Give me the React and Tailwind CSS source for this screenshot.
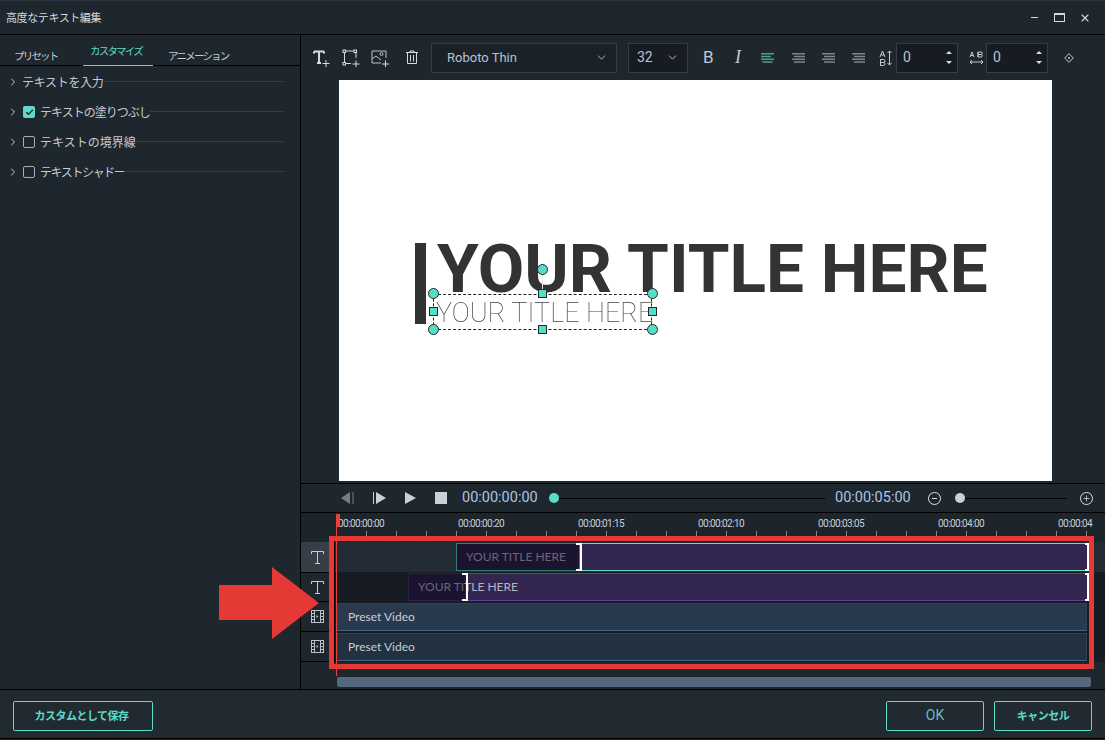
import React from 'react'
import { ChevronDown, ChevronRight, Check, Plus, X } from 'lucide-react'

const jp = { fontFamily: '"Noto Sans CJK JP", "Noto Sans", sans-serif' }

const sections = [
  { label: 'テキストを入力', box: null, tracking: 'tracking-[-0.3px]' },
  { label: 'テキストの塗りつぶし', box: true, tracking: 'tracking-[-1px]' },
  { label: 'テキストの境界線', box: false, tracking: 'tracking-[0px]' },
  { label: 'テキストシャドー', box: false, tracking: 'tracking-[-1.4px]' },
]

const rulerLabels = ['00:00:00:00', '00:00:00:20', '00:00:01:15', '00:00:02:10', '00:00:03:05', '00:00:04:00', '00:00:04']

const TextPlusIcon = () => (
  <svg width="18" height="18" viewBox="0 0 18 18" fill="none" stroke="#d5dbe2">
    <path d="M1 2.500h10M6 2.500v11M1 2.500v2M11 2.500v2M4 14h4" strokeWidth="2" />
    <path d="M9.500 14.500h7M13 11v7" strokeWidth="1" />
  </svg>
)

const BoxPlusIcon = () => (
  <svg width="18" height="18" viewBox="0 0 18 18" fill="none" stroke="#d5dbe2">
    <path d="M4 2h8M2.500 4v9M14 4v5M4 14.500h5" />
    <rect x="1" y="1" width="2.500" height="2.500" />
    <rect x="12" y="1" width="2.500" height="2.500" />
    <rect x="1" y="13.500" width="2.500" height="2.500" />
    <path d="M10.500 15h7M14 11.500v6.500" />
  </svg>
)

const ImagePlusIcon = () => (
  <svg width="19" height="18" viewBox="0 0 19 18" fill="none" stroke="#b9c0c8">
    <path d="M10 14H1V2h14v7" />
    <circle cx="10.500" cy="5" r="1.500" />
    <path d="M1 10l4-3 5 4" />
    <path d="M11 15h7M14.500 11.500v6.500" stroke="#d5dbe2" />
  </svg>
)

const TrashIcon = () => (
  <svg width="14" height="15" viewBox="0 0 14 15" fill="none" stroke="#d5dbe2">
    <path d="M1 2.500h12M5 2.500V1h4v1.500M2.500 3v10.500h9V3M5.500 5v6.500M8.500 5v6.500" />
  </svg>
)

const AlignIcon = ({ color = '#7d858d', left = false }) => (
  <svg width="14" height="10" viewBox="0 0 14 10" stroke={color} strokeWidth="1.400">
    <path d={left ? 'M0 .8h13M0 3.500h10M0 6.200h13M1.500 9h10' : 'M1 .8h13M3 3.500h11M1 6.200h13M3 9h11'} />
  </svg>
)

const TrackTIcon = () => (
  <svg width="13" height="13" viewBox="0 0 13 13" fill="none" stroke="#c9ced4">
    <path d="M.5 3V.500h12V3M6.500 .5v12M4 12.500h5" />
  </svg>
)

const FilmIcon = () => (
  <svg width="13" height="13" viewBox="0 0 13 13" fill="none" stroke="#b9bfc6">
    <rect x=".5" y=".5" width="12" height="12" />
    <path d="M3.500 .5v12M9.500 .5v12M.5 3.500h3M.5 6.500h3M.5 9.500h3M9.500 3.500h3M9.500 6.500h3M9.500 9.500h3" />
    <path d="M5.500 5l2 1.500-2 1.500z" fill="#b9bfc6" stroke="none" />
  </svg>
)

const Stepper = () => (
  <div className="flex flex-col gap-[7px] items-center">
    <div className="w-0 h-0 border-x-[3px] border-x-transparent border-b-[3px] border-b-[#d5dbe2]" />
    <div className="w-0 h-0 border-x-[3px] border-x-transparent border-t-[3px] border-t-[#d5dbe2]" />
  </div>
)

const Dot = ({ className }) => (
  <div className={`absolute w-[11px] h-[11px] rounded-full bg-[#5adcc9] border border-[#1d2a2e] ${className}`} />
)

const Square = ({ className }) => (
  <div className={`absolute w-[9px] h-[9px] bg-[#5adcc9] border border-[#1d2a2e] ${className}`} />
)

const Bracket = ({ className }) => (
  <div className={`absolute border-y-2 border-r-2 border-white ${className}`} />
)

const App = () => {
  return (
    <div className="relative w-[1105px] h-[740px] overflow-hidden flex flex-col bg-[#1e262e] border-t border-[#2c3540]" style={jp}>
      {/* Title bar */}
      <div className="h-[34px] shrink-0 flex items-center justify-between border-b border-black pl-[6px] pr-[14px]">
        <span className="text-[11px] tracking-[-0.4px] text-[#d5d9de]">高度なテキスト編集</span>
        <div className="flex items-center text-[#d5d9de]">
          <div className="w-[7px] h-px bg-[#d5d9de]" />
          <div className="ml-[16px] w-[11px] h-[9px] border border-t-2 border-[#d5d9de]" />
          <X size={12} strokeWidth={2.2} className="ml-[14px]" />
        </div>
      </div>

      <div className="flex h-[654px] shrink-0">
        {/* Left panel */}
        <aside className="w-[301px] shrink-0 border-r border-black">
          <div className="h-[31px] flex items-end border-b border-black text-[10.500px] tracking-[-1.800px] text-[#c6cbd1]">
            <div className="w-[83px] pl-[14px] pb-[1px]">プリセット</div>
            <div className="w-[70px] h-[23px] pl-[7px] border-b border-[#5adcc9] text-[#5adcc9] -mb-px">カスタマイズ</div>
            <div className="pl-[15px] pb-[1px]">アニメーション</div>
          </div>
          <div className="pt-[1px]">
            {sections.map((s) => (
              <div key={s.label} className="h-[30px] flex items-center pl-[8px] pr-[16px] text-[#c6cbd1]">
                <ChevronRight size={12} strokeWidth={2} className="shrink-0 -ml-[1px] mr-[3px]" />
                {s.box === true && (
                  <div className="w-[12px] h-[12px] ml-[1px] mr-[5px] rounded-[2px] bg-[#5adcc9] flex items-center justify-center">
                    <Check size={9} strokeWidth={3.5} className="text-[#1e262e]" />
                  </div>
                )}
                {s.box === false && <div className="w-[12px] h-[12px] ml-[1px] mr-[5px] rounded-[2px] border border-[#a6adb5]" />}
                <span className={`text-[12px] whitespace-nowrap ${s.tracking}`}>{s.label}</span>
                <div className="flex-1 h-px bg-[#343d48] mt-[-1px]" />
              </div>
            ))}
          </div>
        </aside>

        <main className="flex-1 min-w-0 flex flex-col">
          {/* Toolbar */}
          <div className="h-[45px] shrink-0 flex items-center pl-[12px]">
            <TextPlusIcon />
            <div className="ml-[11px]"><BoxPlusIcon /></div>
            <div className="ml-[11px]"><ImagePlusIcon /></div>
            <div className="ml-[15px]"><TrashIcon /></div>
            <div className="ml-[12px] w-[186px] h-[30px] flex items-center justify-between pl-[15px] pr-[8px] bg-[#1b2128] border border-[#343d48] text-[#b4c3d2] text-[13px]" style={{ fontFamily: 'Roboto, sans-serif' }}>
              Roboto Thin
              <ChevronDown size={13} strokeWidth={1.5} className="text-[#d5dbe2]" />
            </div>
            <div className="ml-[11px] w-[60px] h-[30px] flex items-center justify-between pl-[8px] pr-[8px] bg-[#171c23] border border-[#343d48] text-[#b4c3d2] text-[14px]" style={{ fontFamily: 'Roboto, sans-serif' }}>
              32
              <ChevronDown size={13} strokeWidth={1.5} className="text-[#d5dbe2]" />
            </div>
            <span className="ml-[15px] w-[12px] text-[17px] text-[#c3cad1] font-normal" style={{ fontFamily: 'Roboto, sans-serif' }}>B</span>
            <span className="ml-[20px] w-[10px] text-[18px] italic text-[#c3cad1]" style={{ fontFamily: '"Liberation Serif", serif' }}>I</span>
            <div className="ml-[16px]"><AlignIcon color="#4c9c8f" left /></div>
            <div className="ml-[16px]"><AlignIcon /></div>
            <div className="ml-[16px]"><AlignIcon /></div>
            <div className="ml-[16px]"><AlignIcon /></div>
            <div className="ml-[14px] w-[14px] flex items-center text-[#c3cad1]">
              <svg width="14" height="16" viewBox="0 0 14 16" fill="none" stroke="#c3cad1">
                <path d="M1 7l2.500-6L6 7M2 5h3M1.500 9.500h3a1.500 1.500 0 010 3h-3zM1.500 12.500h3a1.500 1.500 0 010 3h-3zM1.500 9.500v6M10.500 1v14M8.500 3l2-2 2 2M8.500 13l2 2 2-2" />
              </svg>
            </div>
            <div className="ml-[3px] w-[62px] h-[30px] flex items-center justify-between pl-[6px] pr-[5px] bg-[#171c23] border border-[#343d48] text-[#b4c3d2] text-[14px]" style={{ fontFamily: 'Roboto, sans-serif' }}>
              0
              <Stepper />
            </div>
            <div className="ml-[11px] w-[15px]">
              <svg width="15" height="14" viewBox="0 0 15 14" fill="none" stroke="#c3cad1">
                <path d="M1 6l2-5 2 5M2 4.500h2M9 1h3a1 1 0 010 2.500H9zM9 3.500h3a1 1 0 010 2.500H9zM9 1v5M1 11h13M3 9l-2 2 2 2M12 9l2 2-2 2" />
              </svg>
            </div>
            <div className="ml-[2px] w-[62px] h-[30px] flex items-center justify-between pl-[6px] pr-[5px] bg-[#171c23] border border-[#343d48] text-[#b4c3d2] text-[14px]" style={{ fontFamily: 'Roboto, sans-serif' }}>
              0
              <Stepper />
            </div>
            <div className="ml-[16px]">
              <svg width="10" height="10" viewBox="0 0 10 10" fill="none" stroke="#c3cad1">
                <path d="M5 .7L9.300 5 5 9.300 .7 5z" />
                <circle cx="5" cy="5" r="1" fill="#c3cad1" stroke="none" />
              </svg>
            </div>
          </div>

          {/* Preview */}
          <div className="h-[401px] shrink-0 pl-[38px]">
            <div className="relative w-[713px] h-full bg-white overflow-hidden" style={{ fontFamily: 'Roboto, sans-serif' }}>
              <div className="absolute left-[76px] top-[163px] w-[11px] h-[81px] bg-[#333333]" />
              <div className="absolute left-[98px] top-[149px] text-[67.500px] leading-[80px] font-bold whitespace-nowrap text-[#333333]">YOUR TITLE HERE</div>
              <div className="absolute left-[97px] top-[213px] text-[27px] leading-[40px] font-thin whitespace-nowrap text-[#444444] will-change-transform">YOUR TITLE HERE</div>

              <div className="absolute left-[94px] top-[214px] w-[219px] h-[36px] border border-dashed border-[#222222]" />
              <div className="absolute left-[203px] top-[194px] w-px h-[20px] bg-[#e4e4e4]" />
              <Dot className="left-[198px] top-[184px]" />
              <Dot className="left-[89px] top-[208px]" />
              <Dot className="left-[308px] top-[208px]" />
              <Dot className="left-[89px] top-[244px]" />
              <Dot className="left-[308px] top-[244px]" />
              <Square className="left-[199px] top-[209px]" />
              <Square className="left-[90px] top-[227px]" />
              <Square className="left-[309px] top-[227px]" />
              <Square className="left-[199px] top-[245px]" />
            </div>
          </div>

          {/* Transport */}
          <div className="h-[2px] shrink-0" />
          <div className="h-[30px] shrink-0 flex items-center border-y border-black pl-[40px] text-[14.500px] text-[#a9c5e2]" style={{ fontFamily: 'Roboto, sans-serif' }}>
            <svg width="13" height="12" viewBox="0 0 13 12" fill="#767d85">
              <path d="M9 0v12L0 6zM11.500 0h1v12h-1z" />
            </svg>
            <svg className="ml-[19px]" width="13" height="12" viewBox="0 0 13 12" fill="#c9d0d8">
              <path d="M0 0h1v12H0zM3 0l10 6-10 6z" />
            </svg>
            <svg className="ml-[19px]" width="11" height="12" viewBox="0 0 11 12" fill="#c9d0d8">
              <path d="M0 0l11 6-11 6z" />
            </svg>
            <div className="ml-[19px] w-[12px] h-[12px] bg-[#c9d0d8]" />
            <span className="ml-[15px] w-[76px] whitespace-nowrap">00:00:00:00</span>
            <div className="relative ml-[16px] w-[271px] h-px bg-black">
              <div className="absolute -left-[5px] -top-[5px] w-[10px] h-[10px] rounded-full bg-[#5adcc9]" />
            </div>
            <span className="ml-[10px] w-[76px] whitespace-nowrap">00:00:05:00</span>
            <div className="ml-[17px] w-[13px] h-[13px] rounded-full border border-[#dde2e8] flex items-center justify-center">
              <div className="w-[5px] h-px bg-[#dde2e8]" />
            </div>
            <div className="relative ml-[19px] w-[107px] h-px bg-black">
              <div className="absolute -left-[5px] -top-[5px] w-[10px] h-[10px] rounded-full bg-[#c9d0d8]" />
            </div>
            <div className="ml-[13px] w-[13px] h-[13px] rounded-full border border-[#dde2e8] flex items-center justify-center">
              <Plus size={9} strokeWidth={2} className="text-[#dde2e8]" />
            </div>
          </div>

          {/* Ruler */}
          <div className="h-[29px] shrink-0 pl-[36px] bg-[#1c242c] overflow-hidden" style={{ fontFamily: 'Roboto, sans-serif' }}>
            <div className="flex h-[18px] items-end">
              {rulerLabels.map((t) => (
                <div key={t} className="w-[120px] shrink-0 pl-[1px] text-[10px] leading-[14px] tracking-[-0.55px] text-[#c9d0d8] whitespace-nowrap">{t}</div>
              ))}
            </div>
            <div className="flex h-[5px] -ml-px">
              {Array.from({ length: 26 }).map((_, i) => (
                <div key={i} className="w-[30px] shrink-0 border-l border-[#6f8ba3]" />
              ))}
            </div>
          </div>

          {/* Tracks */}
          <div className="shrink-0">
            <div className="flex h-[30px]">
              <div className="w-[34px] shrink-0 bg-[#363e48] border-r border-black flex items-center justify-center"><TrackTIcon /></div>
              <div className="relative flex-1 bg-[#232c35]">
                <div className="absolute left-[121px] right-[17px] top-[1px] h-[28px] bg-[#332650] border-y border-[#5adcc9]" />
                <div className="absolute left-[121px] w-[124px] top-[1px] h-[28px] bg-[#1a1430] border border-[#2f7f70] flex items-center pl-[9px] text-[12px] text-[#6a6672] whitespace-nowrap" style={{ fontFamily: 'Lato, sans-serif' }}>YOUR TITLE HERE</div>
                <Bracket className="left-[241px] w-[6px] top-[1px] h-[28px]" />
                <Bracket className="left-[750px] w-[4px] top-[1px] h-[28px]" />
              </div>
            </div>
            <div className="flex h-[30px]">
              <div className="w-[34px] shrink-0 border-y border-r border-black flex items-center justify-center"><TrackTIcon /></div>
              <div className="relative flex-1 bg-[#171c23]">
                <div className="absolute left-[73px] right-[17px] top-[1px] h-[28px] bg-[#332650] border-y border-[#59409a]" />
                <div className="absolute left-[73px] w-[58px] top-[1px] h-[28px] bg-[#1a1430] border border-[#2c2048]" />
                <div className="absolute left-[83px] top-[1px] h-[28px] flex items-center text-[12px] whitespace-nowrap" style={{ fontFamily: 'Lato, sans-serif' }}>
                  <span className="text-[#6a6672]">YOUR TI</span>
                  <span className="text-[#b9b5c4]">TLE HERE</span>
                </div>
                <Bracket className="left-[127px] w-[6px] top-[1px] h-[28px]" />
                <Bracket className="left-[750px] w-[4px] top-[1px] h-[28px]" />
              </div>
            </div>
            {['bg-[#2a3a4e]', 'bg-[#22303f]'].map((bg) => (
              <div key={bg} className="flex h-[30px]">
                <div className="w-[34px] shrink-0 border-b border-r border-black flex items-center justify-center"><FilmIcon /></div>
                <div className="flex-1 bg-[#171c23] pl-[2px] pr-[18px] py-[1px]">
                  <div className={`h-full flex items-center pl-[10px] border border-[#2f4258] border-b-[#3c6590] text-[12px] text-[#c6ced6] ${bg}`} style={{ fontFamily: 'Lato, sans-serif' }}>Preset Video</div>
                </div>
              </div>
            ))}
          </div>

          {/* Scrollbar */}
          <div className="flex-1 pl-[36px] pr-[14px] pt-[15px]">
            <div className="h-[10px] rounded-[2px] bg-[#56687e]" />
          </div>
        </main>
      </div>

      {/* Footer */}
      <footer className="h-[50px] shrink-0 flex items-center justify-between border-y border-black bg-[#222a31] pl-[13px] pr-[13px] text-[11px] font-bold text-[#5adcc9]">
        <button className="w-[140px] h-[30px] mt-[3px] pr-[3px] rounded-[2px] border border-[#5adcc9] tracking-[-0.5px]">カスタムとして保存</button>
        <div className="flex gap-[10px] mt-[3px]">
          <button className="w-[98px] h-[30px] rounded-[2px] border border-[#5adcc9] text-[14px] font-normal text-[#62bcc4]" style={{ fontFamily: 'Roboto, sans-serif' }}>OK</button>
          <button className="w-[98px] h-[30px] rounded-[2px] border border-[#5adcc9] tracking-[-0.5px]">キャンセル</button>
        </div>
      </footer>

      {/* Annotation and playhead over the timeline */}
      <div className="absolute left-[336px] top-[513px] w-px h-[162px] bg-[#e8403c]" />
      <div className="absolute left-[336px] top-[513px] w-[4px] h-[13px] bg-[#e8403c]" />
      <div className="absolute left-[329px] top-[535px] w-[765px] h-[133px] border-[5px] border-[#e53935]" />
      <svg className="absolute left-[219px] top-[565px]" width="101" height="73" viewBox="0 0 101 73" fill="#e53935">
        <path d="M0 19h53V1l47 36-47 36V54H0z" />
      </svg>
    </div>
  )
}

export default App
